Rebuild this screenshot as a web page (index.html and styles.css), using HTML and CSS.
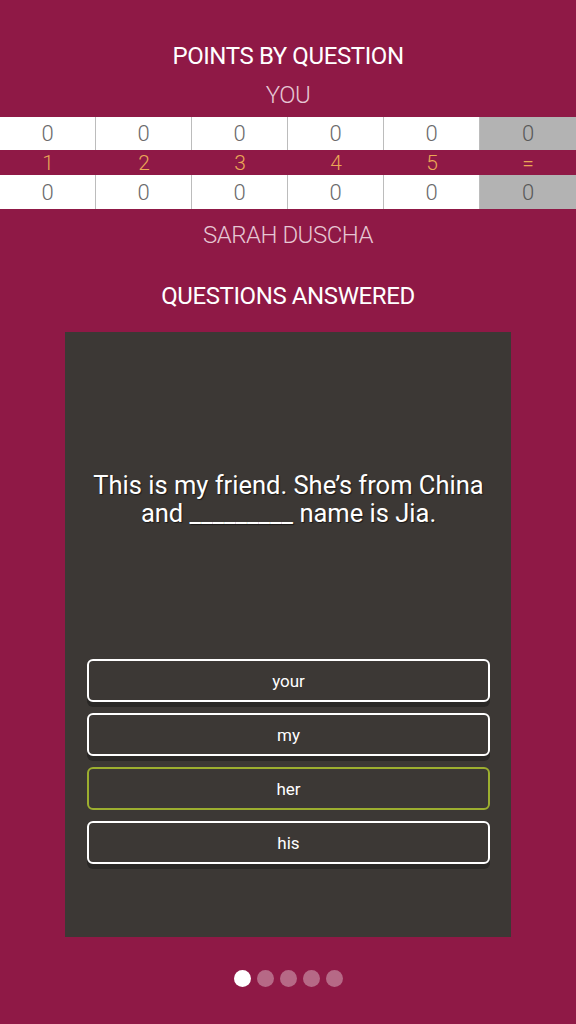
FILE: index.html
```html
<!DOCTYPE html>
<html lang="en">
<head>
<meta charset="utf-8">
<title>Points by question</title>
<link rel="stylesheet" href="styles.css">
</head>
<body>
<main class="screen">
  <h1 class="title">POINTS BY QUESTION</h1>
  <div class="player">YOU</div>
  <div class="scores">
    <div class="row row-score">
      <div class="cell">0</div><div class="cell">0</div><div class="cell">0</div><div class="cell">0</div><div class="cell">0</div><div class="cell total">0</div>
    </div>
    <div class="row row-label">
      <div class="cell">1</div><div class="cell">2</div><div class="cell">3</div><div class="cell">4</div><div class="cell">5</div><div class="cell">=</div>
    </div>
    <div class="row row-score row-bottom">
      <div class="cell">0</div><div class="cell">0</div><div class="cell">0</div><div class="cell">0</div><div class="cell">0</div><div class="cell total">0</div>
    </div>
  </div>
  <div class="player opponent">SARAH DUSCHA</div>
  <h2 class="title answered">QUESTIONS ANSWERED</h2>
  <section class="card">
    <p class="question">This is my friend. She’s from China<br>and _________ name is Jia.</p>
    <div class="answers">
      <div class="answer">your</div>
      <div class="answer">my</div>
      <div class="answer correct">her</div>
      <div class="answer">his</div>
    </div>
  </section>
  <nav class="dots">
    <span class="dot active"></span><span class="dot"></span><span class="dot"></span><span class="dot"></span><span class="dot"></span>
  </nav>
</main>
</body>
</html>
```

FILE: styles.css
```css
html, body {
  margin: 0;
  padding: 0;
}
body {
  background: #8f1946;
  font-family: Roboto, "Open Sans", sans-serif;
  color: #fff;
}
.screen {
  width: 576px;
  height: 1024px;
  display: flex;
  flex-direction: column;
  align-items: center;
  overflow: hidden;
}
.title {
  margin: 41px 0 0;
  font-size: 24px;
  font-weight: 400;
  line-height: 30px;
  letter-spacing: -0.4px;
  color: #fff;
  text-align: center;
}
.player {
  margin-top: 9px;
  font-size: 24px;
  font-weight: 300;
  line-height: 30px;
  letter-spacing: -0.5px;
  color: #e6c6d3;
}
.scores {
  margin-top: 7px;
  width: 576px;
}
.row {
  display: grid;
  grid-template-columns: repeat(6, 96px);
}
.row-score {
  height: 33px;
  background: #fff;
}
.row-bottom {
  height: 34px;
}
.row-score .cell {
  border-right: 1px solid #bcbcbc;
  color: #6b6b6b;
}
.row-score .cell.total {
  border-right: none;
  background: #b3b3b3;
  color: #595959;
}
.cell {
  display: flex;
  align-items: center;
  justify-content: center;
  font-size: 22px;
  font-weight: 300;
}
.row-label {
  height: 25px;
}
.row-label .cell {
  color: #eaa756;
  font-size: 21px;
}
.opponent {
  margin-top: 11px;
}
.answered {
  margin-top: 31px;
}
.card {
  margin-top: 21px;
  width: 446px;
  height: 605px;
  background: #3c3835;
  box-sizing: border-box;
  padding: 139px 21px 0 22px;
  display: flex;
  flex-direction: column;
}
.question {
  margin: 0;
  font-size: 25.5px;
  line-height: 28px;
  text-align: center;
  color: #fff;
  letter-spacing: 0;
  text-shadow: 1px 1px 1px rgba(0, 0, 0, 0.55);
}
.answers {
  margin-top: 132px;
  display: flex;
  flex-direction: column;
  gap: 11px;
}
.answer {
  height: 43px;
  box-sizing: border-box;
  border: 2px solid #fff;
  border-radius: 6px;
  display: flex;
  align-items: center;
  justify-content: center;
  font-size: 17px;
  color: #fff;
  box-shadow: 0 5px 0 #2a2826;
}
.answer.correct {
  border-color: #9cae2f;
  box-shadow: none;
}
.dots {
  margin-top: 33px;
  display: flex;
  gap: 6px;
}
.dot {
  width: 17px;
  height: 17px;
  border-radius: 50%;
  background: rgba(255, 255, 255, 0.35);
}
.dot.active {
  background: #fff;
}
```
